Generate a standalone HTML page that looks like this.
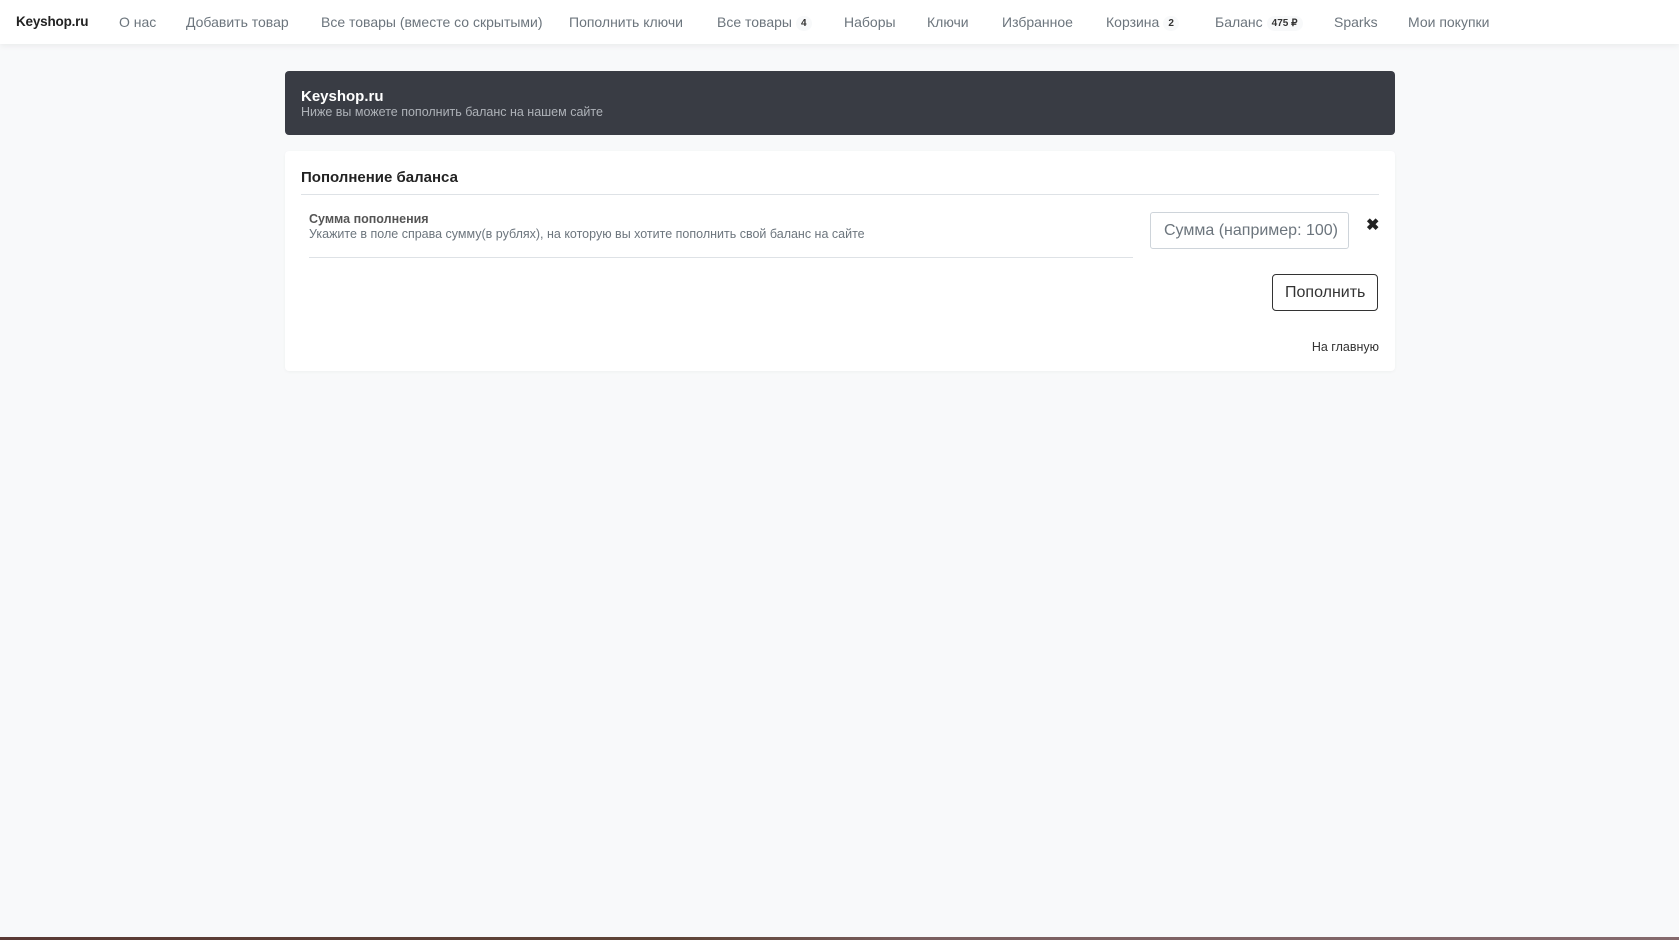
<!DOCTYPE html>
<html><head><meta charset="utf-8"><style>
*{margin:0;padding:0;box-sizing:border-box}
body{width:1679px;height:940px;background:#f8f9fa;font-family:"Liberation Sans",sans-serif;position:relative;overflow:hidden}
.nav{position:absolute;left:0;top:0;width:1679px;height:44px;background:#fff;box-shadow:0 2px 6px rgba(0,0,0,.06)}
.nav span{position:absolute;top:14px;font-size:14px;color:#6c757d;white-space:nowrap}
.badge{display:inline-block;background:#f8f9fa;color:#333;font-size:10px;font-weight:bold;padding:2px 5px;border-radius:8px;margin-left:4px;vertical-align:1px}
.hdr{position:absolute;left:285px;top:71px;width:1110px;height:64px;background:#393c44;border-radius:4px;color:#fff}
.card{position:absolute;left:285px;top:151px;width:1110px;height:220px;background:#fff;border-radius:4px;box-shadow:0 1px 3px rgba(0,0,0,.04)}
.a{position:absolute;white-space:nowrap}
</style></head><body>
<div class="nav">
<span style="left:16px;color:#222;font-weight:bold;font-size:13.5px;letter-spacing:-0.2px">Keyshop.ru</span>
<span style="left:119px">О нас</span>
<span style="left:186px">Добавить товар</span>
<span style="left:321px">Все товары (вместе со скрытыми)</span>
<span style="left:569px">Пополнить ключи</span>
<span style="left:717px">Все товары<i class="badge" style="font-style:normal">4</i></span>
<span style="left:844px">Наборы</span>
<span style="left:927px">Ключи</span>
<span style="left:1002px">Избранное</span>
<span style="left:1106px">Корзина<i class="badge" style="font-style:normal">2</i></span>
<span style="left:1215px">Баланс<i class="badge" style="font-style:normal">475 ₽</i></span>
<span style="left:1334px">Sparks</span>
<span style="left:1408px">Мои покупки</span>
</div>
<div class="hdr">
<div class="a" style="left:16px;top:17px;font-size:15px;font-weight:bold">Keyshop.ru</div>
<div class="a" style="left:16px;top:34px;font-size:12.5px;color:#aeb2b8">Ниже вы можете пополнить баланс на нашем сайте</div>
</div>
<div class="card">
<div class="a" style="left:16px;top:18px;font-size:15px;font-weight:bold;color:#222">Пополнение баланса</div>
<div class="a" style="left:16px;top:43px;width:1078px;height:1px;background:#dee2e6"></div>
<div class="a" style="left:24px;top:61px;font-size:12.5px;font-weight:bold;color:#555">Сумма пополнения</div>
<div class="a" style="left:24px;top:76px;font-size:12.5px;color:#6c757d">Укажите в поле справа сумму(в рублях), на которую вы хотите пополнить свой баланс на сайте</div>
<div class="a" style="left:24px;top:106px;width:824px;height:1px;background:#dee2e6"></div>
<div class="a" style="left:865px;top:61px;width:199px;height:37px;border:1px solid #ced4da;border-radius:3px;font-size:16px;color:#6c757d;padding:9px 0 0 13px">Сумма (например: 100)</div>
<div class="a" style="left:1081px;top:64px;font-size:16px;font-weight:bold;color:#222">✖</div>
<div class="a" style="left:987px;top:123px;width:106px;height:37px;border:1px solid #333;border-radius:4px;font-size:16px;color:#333;padding:9px 0 0 12px">Пополнить</div>
<div class="a" style="right:16px;top:189px;font-size:12.5px;color:#333">На главную</div>
</div>
<div class="a" style="left:0;top:937px;width:1679px;height:3px;background:linear-gradient(90deg,#5a3a35,#5e4436 40%,#7a5f5f 55%,#856a6d)"></div>
</body></html>
